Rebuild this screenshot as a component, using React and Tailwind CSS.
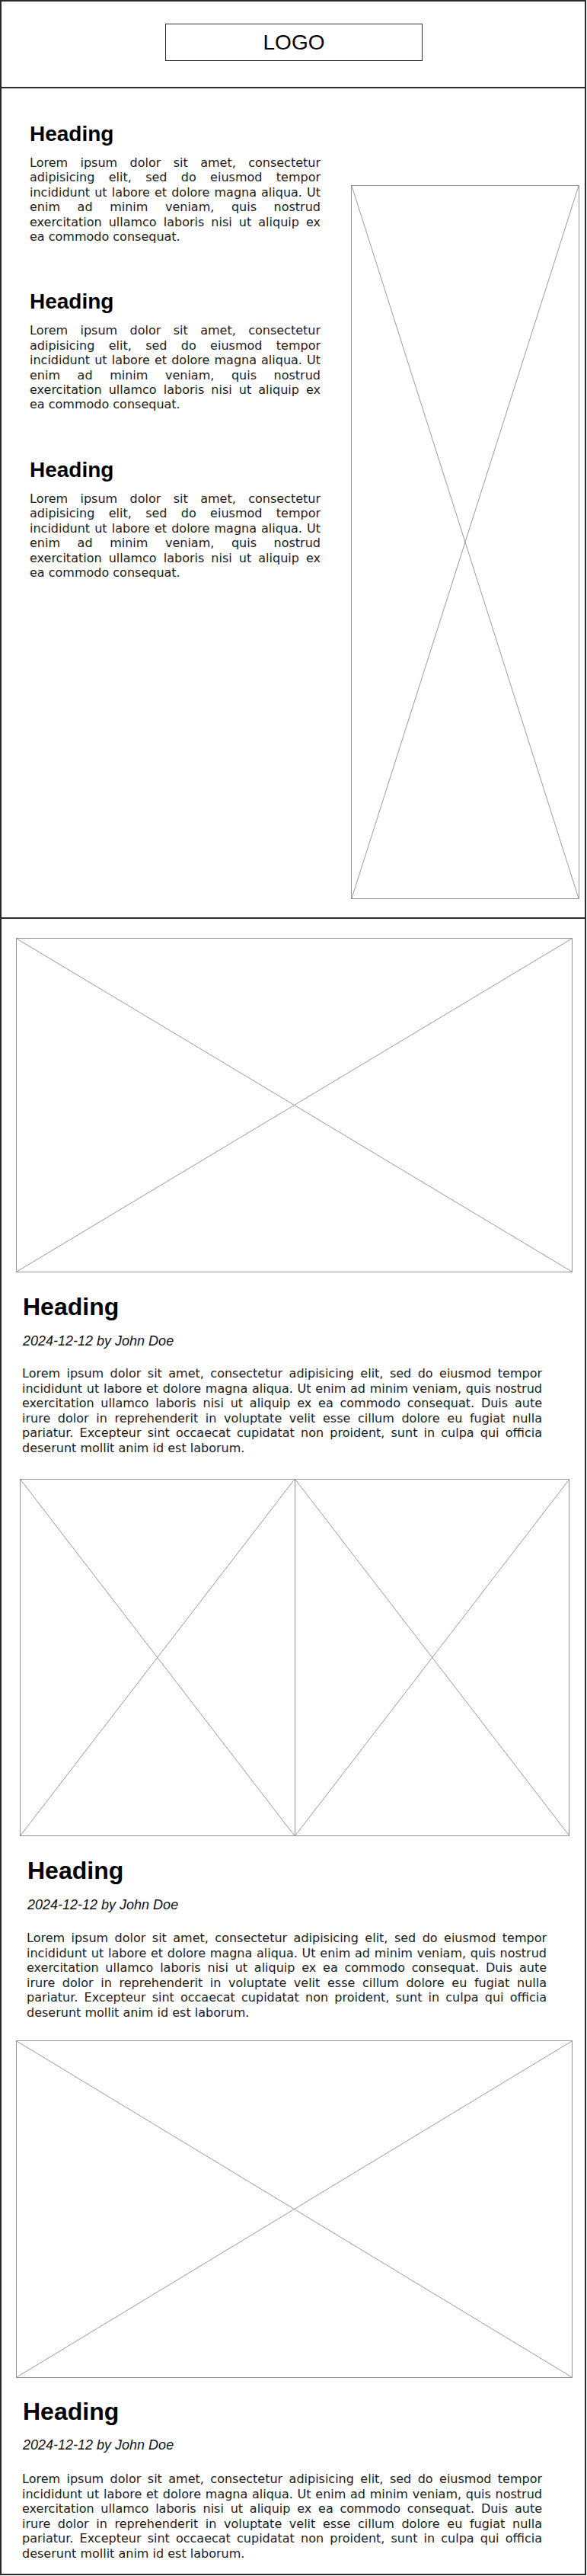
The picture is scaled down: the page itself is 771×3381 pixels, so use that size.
import React from "react";

const lorem =
  "Lorem ipsum dolor sit amet, consectetur adipisicing elit, sed do eiusmod tempor incididunt ut labore et dolore magna aliqua. Ut enim ad minim veniam, quis nostrud exercitation ullamco laboris nisi ut aliquip ex ea commodo consequat.";

const loremLong =
  "Lorem ipsum dolor sit amet, consectetur adipisicing elit, sed do eiusmod tempor incididunt ut labore et dolore magna aliqua. Ut enim ad minim veniam, quis nostrud exercitation ullamco laboris nisi ut aliquip ex ea commodo consequat. Duis aute irure dolor in reprehenderit in voluptate velit esse cillum dolore eu fugiat nulla pariatur. Excepteur sint occaecat cupidatat non proident, sunt in culpa qui officia deserunt mollit anim id est laborum.";

function Cross() {
  return (
    <svg
      className="absolute inset-0 w-full h-full"
      viewBox="0 0 100 100"
      preserveAspectRatio="none"
    >
      <line x1="0" y1="0" x2="100" y2="100" stroke="#9a9a9a" strokeWidth="1" vectorEffect="non-scaling-stroke" />
      <line x1="100" y1="0" x2="0" y2="100" stroke="#9a9a9a" strokeWidth="1" vectorEffect="non-scaling-stroke" />
    </svg>
  );
}

function Placeholder({ className }) {
  return (
    <div className={"relative border border-[#949494] " + className}>
      <Cross />
    </div>
  );
}

function SideBlock() {
  return (
    <div>
      <h2 className="text-[28px] leading-none font-bold text-black font-['Liberation_Sans',Arial,sans-serif]">
        Heading
      </h2>
      <p className="mt-[14px] text-[16px] leading-[19.4px] text-[#1a1a1a] text-justify font-['DejaVu_Sans',Verdana,sans-serif]">
        {lorem}
      </p>
    </div>
  );
}

function Post({ dx, hTop, dTop, pTop }) {
  return (
    <div style={{ marginLeft: dx }}>
      <h2
        className="text-[32px] leading-none font-bold text-black font-['Liberation_Sans',Arial,sans-serif]"
        style={{ marginTop: hTop }}
      >
        Heading
      </h2>
      <div
        className="text-[18px] leading-none italic text-[#111] font-['Liberation_Sans',Arial,sans-serif]"
        style={{ marginTop: dTop }}
      >
        2024-12-12 by John Doe
      </div>
      <p
        className="w-[683px] -ml-[1px] text-[16px] leading-[19.5px] text-[#1a1a1a] text-justify font-['DejaVu_Sans',Verdana,sans-serif]"
        style={{ marginTop: pTop }}
      >
        {loremLong}
      </p>
    </div>
  );
}

export default function App() {
  return (
    <div className="w-[771px] min-h-[3381px] bg-white">
      <div className="w-[770px] h-[3380px] border-2 border-[#2b2b2b] flex flex-col">
        {/* header */}
        <div className="h-[114px] border-b-2 border-[#2b2b2b] flex justify-center pt-[29px]">
          <div className="ml-[2px] w-[338px] h-[49px] border-[1.5px] border-[#333] flex items-center justify-center">
            <span className="text-[28px] leading-none text-black font-['Liberation_Sans',Arial,sans-serif]">
              LOGO
            </span>
          </div>
        </div>

        {/* features */}
        <div className="h-[1090px] border-b-2 border-[#2b2b2b] flex">
          <div className="ml-[37px] w-[382px] pt-[46px] flex flex-col gap-[62px]">
            <SideBlock />
            <SideBlock />
            <SideBlock />
          </div>
          <Placeholder className="ml-[40px] mt-[127px] w-[300px] h-[937px]" />
        </div>

        {/* posts */}
        <div className="flex-1">
          <Placeholder className="ml-[19px] mt-[25px] w-[731px] h-[439px]" />
          <Post dx={28} hTop={29} dTop={20} pTop={24} />

          <div className="ml-[24px] mt-[31px] w-[722px] h-[469px] flex">
            <Placeholder className="flex-1 h-full" />
            <Placeholder className="flex-1 h-full -ml-px" />
          </div>
          <Post dx={34} hTop={29} dTop={20} pTop={25} />

          <Placeholder className="ml-[19px] mt-[27px] w-[731px] h-[443px]" />
          <Post dx={28} hTop={28} dTop={19} pTop={26} />
        </div>
      </div>
    </div>
  );
}
